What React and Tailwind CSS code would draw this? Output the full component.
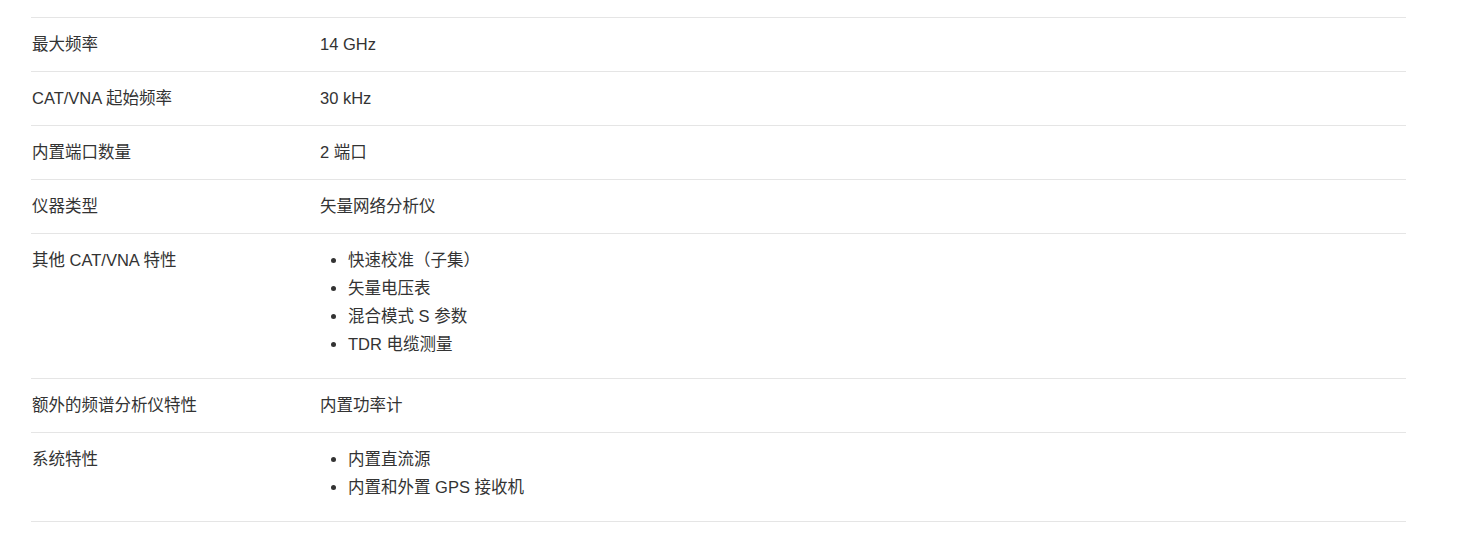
const specs = [
  { label: '最大频率', value: '14 GHz' },
  { label: 'CAT/VNA 起始频率', value: '30 kHz' },
  { label: '内置端口数量', value: '2 端口' },
  { label: '仪器类型', value: '矢量网络分析仪' },
  {
    label: '其他 CAT/VNA 特性',
    items: ['快速校准（子集）', '矢量电压表', '混合模式 S 参数', 'TDR 电缆测量'],
  },
  { label: '额外的频谱分析仪特性', value: '内置功率计' },
  { label: '系统特性', items: ['内置直流源', '内置和外置 GPS 接收机'] },
]

export default function App() {
  return (
    <div
      className="min-h-screen bg-white pt-[17px] pl-[31px] text-[16.5px] text-[#333]"
      style={{ fontFamily: '"Liberation Sans", "Noto Sans CJK SC", sans-serif' }}
    >
      <div className="w-[1375px] border-b border-[#e5e5e5]">
        {specs.map((row) => (
          <div key={row.label} className="flex border-t border-[#e5e5e5] py-[15px] leading-[23px]">
            <div className="w-[289px] shrink-0 pl-px">{row.label}</div>
            <div className="flex-1">
              {row.items ? (
                <ul className="mb-[7px] flex list-disc flex-col gap-[5px] pl-[28px]">
                  {row.items.map((it) => (
                    <li key={it}>{it}</li>
                  ))}
                </ul>
              ) : (
                row.value
              )}
            </div>
          </div>
        ))}
      </div>
    </div>
  )
}
